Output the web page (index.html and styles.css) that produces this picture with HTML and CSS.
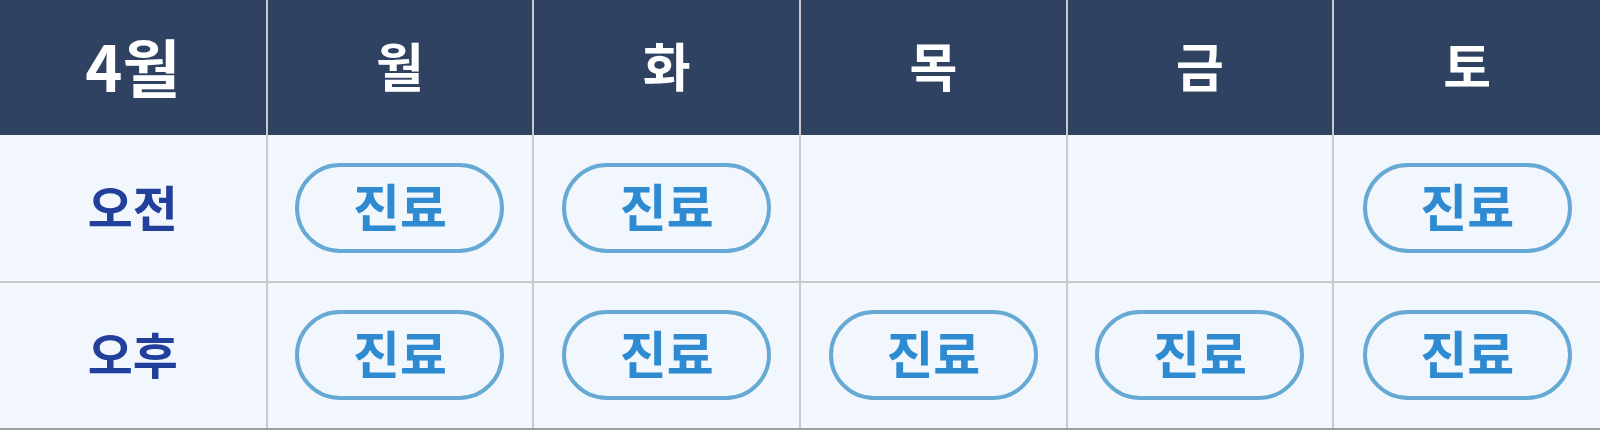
FILE: index.html
```html
<!DOCTYPE html>
<html lang="ko">
<head>
    <meta charset="UTF-8">
    <meta name="viewport" content="width=device-width, initial-scale=1.0">
    <title>진료 시간표</title>
    <link rel="stylesheet" href="styles.css">
</head>
<body>
    <!-- 진료 시간표 -->
    <table class="schedule">
        <thead>
            <tr>
                <th class="month">4월</th>
                <th>월</th>
                <th>화</th>
                <th>목</th>
                <th>금</th>
                <th>토</th>
            </tr>
        </thead>
        <tbody>
            <tr>
                <td class="time">오전</td>
                <td><span class="badge">진료</span></td>
                <td><span class="badge">진료</span></td>
                <td></td>
                <td></td>
                <td><span class="badge">진료</span></td>
            </tr>
            <tr>
                <td class="time">오후</td>
                <td><span class="badge">진료</span></td>
                <td><span class="badge">진료</span></td>
                <td><span class="badge">진료</span></td>
                <td><span class="badge">진료</span></td>
                <td><span class="badge">진료</span></td>
            </tr>
        </tbody>
    </table>
</body>
</html>
```

FILE: styles.css
```css
/* 시간표 기본 스타일 */
body {
    margin: 0;
    background-color: #f2f6fd;
    font-family: "Noto Sans CJK KR", "Noto Sans", sans-serif;
}

.schedule {
    width: 100%;
    table-layout: fixed;
    border-collapse: collapse;
    border-bottom: 3px solid #9b9ea3;
}

.schedule th,
.schedule td {
    box-sizing: border-box;
    padding: 0;
    text-align: center;
    vertical-align: middle;
    border-left: 2px solid #c9c9cb;
}

.schedule th:first-child,
.schedule td:first-child {
    border-left: none;
}

.schedule th {
    height: 135px;
    padding-bottom: 6px;
    background-color: #2f4261;
    color: #fff;
    font-size: 52px;
    font-weight: bold;
    line-height: 1;
}

.schedule th.month {
    font-size: 63px;
}

.schedule td {
    height: 147px;
    background-color: #f2f6fd;
}

.schedule tbody tr + tr td {
    border-top: 2px solid #c9c9cb;
}

.time {
    font-size: 49px;
    font-weight: bold;
    color: #22409b;
    line-height: 1;
}

.schedule td.time {
    padding-bottom: 5px;
}

.badge {
    display: inline-flex;
    align-items: center;
    justify-content: center;
    box-sizing: border-box;
    width: 209px;
    height: 90px;
    padding-bottom: 5px;
    border: 4px solid #66a9d4;
    border-radius: 45px;
    font-size: 51px;
    font-weight: bold;
    color: #2e8bd1;
    line-height: 1;
}
```
